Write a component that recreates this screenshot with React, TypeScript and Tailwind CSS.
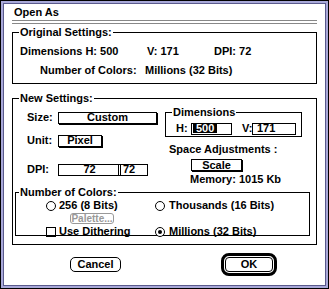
const t = "font-['Liberation_Sans',Arial,sans-serif] font-bold text-[11px] leading-[13px] text-black whitespace-nowrap";

const Radio = ({ on }: { on?: boolean }) => (
  <span className="w-[10px] h-[10px] rounded-full border border-black bg-white flex items-center justify-center shrink-0">
    {on && <span className="w-[4px] h-[4px] rounded-full bg-black" />}
  </span>
);

const App = () => {
  return (
    <div className={`w-[329px] h-[289px] bg-black p-px ${t}`}>
      <div className="h-full border-2 border-[#a8a8d8]">
        <div className="h-full border border-[#5a5a8c] bg-white pt-[2px]">
          {/* title */}
          <div className="h-[14px] pl-[10px]">Open As</div>
          <div className="ml-[8px] w-[305px] h-[4px] border-y border-[#888]" />

          {/* Original Settings */}
          <fieldset className="mt-[2px] ml-[8px] w-[305px] h-[58px] border border-black">
            <legend className="ml-[6px] px-[1px]">Original Settings:</legend>
            <div className="mt-[6px] h-[13px] pl-[7px] flex">
              <span className="w-[127px] shrink-0">Dimensions H: 500</span>
              <span className="w-[67px] shrink-0">V: 171</span>
              <span>DPI: 72</span>
            </div>
            <div className="mt-[6px] h-[13px] pl-[27px] flex">
              <span className="w-[105px] shrink-0">Number of Colors:</span>
              <span>Millions (32 Bits)</span>
            </div>
          </fieldset>

          {/* New Settings */}
          <fieldset className="mt-[8px] ml-[8px] w-[305px] h-[153px] border border-black">
            <legend className="ml-[6px] px-[1px]">New Settings:</legend>
            <div className="flex">
              <div className="w-[152px] shrink-0 pl-[14px]">
                <div className="mt-[6px] flex items-center h-[13px]">
                  <span className="w-[31px] shrink-0">Size:</span>
                  <span className="w-[99px] h-[12px] shrink-0 border border-black shadow-[1px_1px_0_#000] flex items-center justify-center">Custom</span>
                </div>
                <div className="mt-[10px] flex items-center h-[13px]">
                  <span className="w-[31px] shrink-0">Unit:</span>
                  <span className="w-[44px] h-[12px] shrink-0 border border-black shadow-[1px_1px_0_#000] flex items-center justify-center">Pixel</span>
                </div>
                <div className="mt-[16px] flex items-center h-[13px]">
                  <span className="w-[31px] shrink-0">DPI:</span>
                  <span className="w-[63px] h-[12px] shrink-0 border border-black flex items-center justify-center">72</span>
                  <span className="ml-[-3px] w-[30px] h-[12px] shrink-0 border border-black flex items-center pl-[4px]">72</span>
                </div>
              </div>
              <div className="w-[150px] shrink-0">
                <fieldset className="mt-[3px] w-[137px] h-[29px] border border-black">
                  <legend className="ml-[6px] px-[1px] leading-[9px]">Dimensions</legend>
                  <div className="mt-[5px] flex items-center pl-[10px]">
                    <span className="w-[15px] shrink-0">H:</span>
                    <span className="w-[41px] h-[12px] shrink-0 border border-black flex items-center pl-[1px]">
                      <span className="bg-black text-white px-[3px] h-[9px] leading-[9px]">500</span>
                    </span>
                    <span className="ml-[10px] w-[10px] shrink-0">V:</span>
                    <span className="w-[44px] h-[12px] shrink-0 border border-black flex items-center pl-[4px]">171</span>
                  </div>
                </fieldset>
                <div className="mt-[6px] h-[13px] pl-[4px]">Space Adjustments :</div>
                <div className="mt-[3px] ml-[26px] w-[51px] h-[12px] border border-black shadow-[1px_1px_0_#000] flex items-center justify-center">Scale</div>
                <div className="mt-[3px] h-[10px] leading-[10px] pl-[25px]">Memory: 1015 Kb</div>
              </div>
            </div>

            {/* Number of Colors */}
            <fieldset className="mt-[4px] ml-[2px] w-[295px] h-[48px] border border-black">
              <legend className="ml-[3px] px-[1px] leading-[9px]">Number of Colors:</legend>
              <div className="grid grid-cols-[109px_1fr] pl-[30px]">
                <div className="mt-[2px] h-[13px] flex items-center gap-[3px]">
                  <Radio />
                  <span>256 (8 Bits)</span>
                </div>
                <div className="mt-[2px] h-[13px] flex items-center gap-[4px]">
                  <Radio />
                  <span>Thousands (16 Bits)</span>
                </div>
                <div className="col-span-2 ml-[24px] mt-[1px] w-[44px] h-[11px] rounded-[3px] border border-[#999] text-[#999] leading-[9px] text-[10px] flex items-center justify-center">Palette...</div>
                <div className="mt-[1px] h-[13px] flex items-center gap-[3px]">
                  <span className="w-[10px] h-[10px] border border-black shrink-0" />
                  <span>Use Dithering</span>
                </div>
                <div className="mt-[1px] h-[13px] flex items-center gap-[4px]">
                  <Radio on />
                  <span>Millions (32 Bits)</span>
                </div>
              </div>
            </fieldset>
          </fieldset>

          {/* buttons */}
          <div className="mt-[8px] h-[23px] flex items-center">
            <div className="ml-[66px] w-[51px] h-[15px] border border-black rounded-[5px] flex items-center justify-center">Cancel</div>
            <div className="ml-[100px] w-[56px] h-[23px] border-[3px] border-black rounded-[8px] p-px">
              <div className="h-full border border-black rounded-[4px] flex items-center justify-center">OK</div>
            </div>
          </div>
        </div>
      </div>
    </div>
  );
};

export default App;
